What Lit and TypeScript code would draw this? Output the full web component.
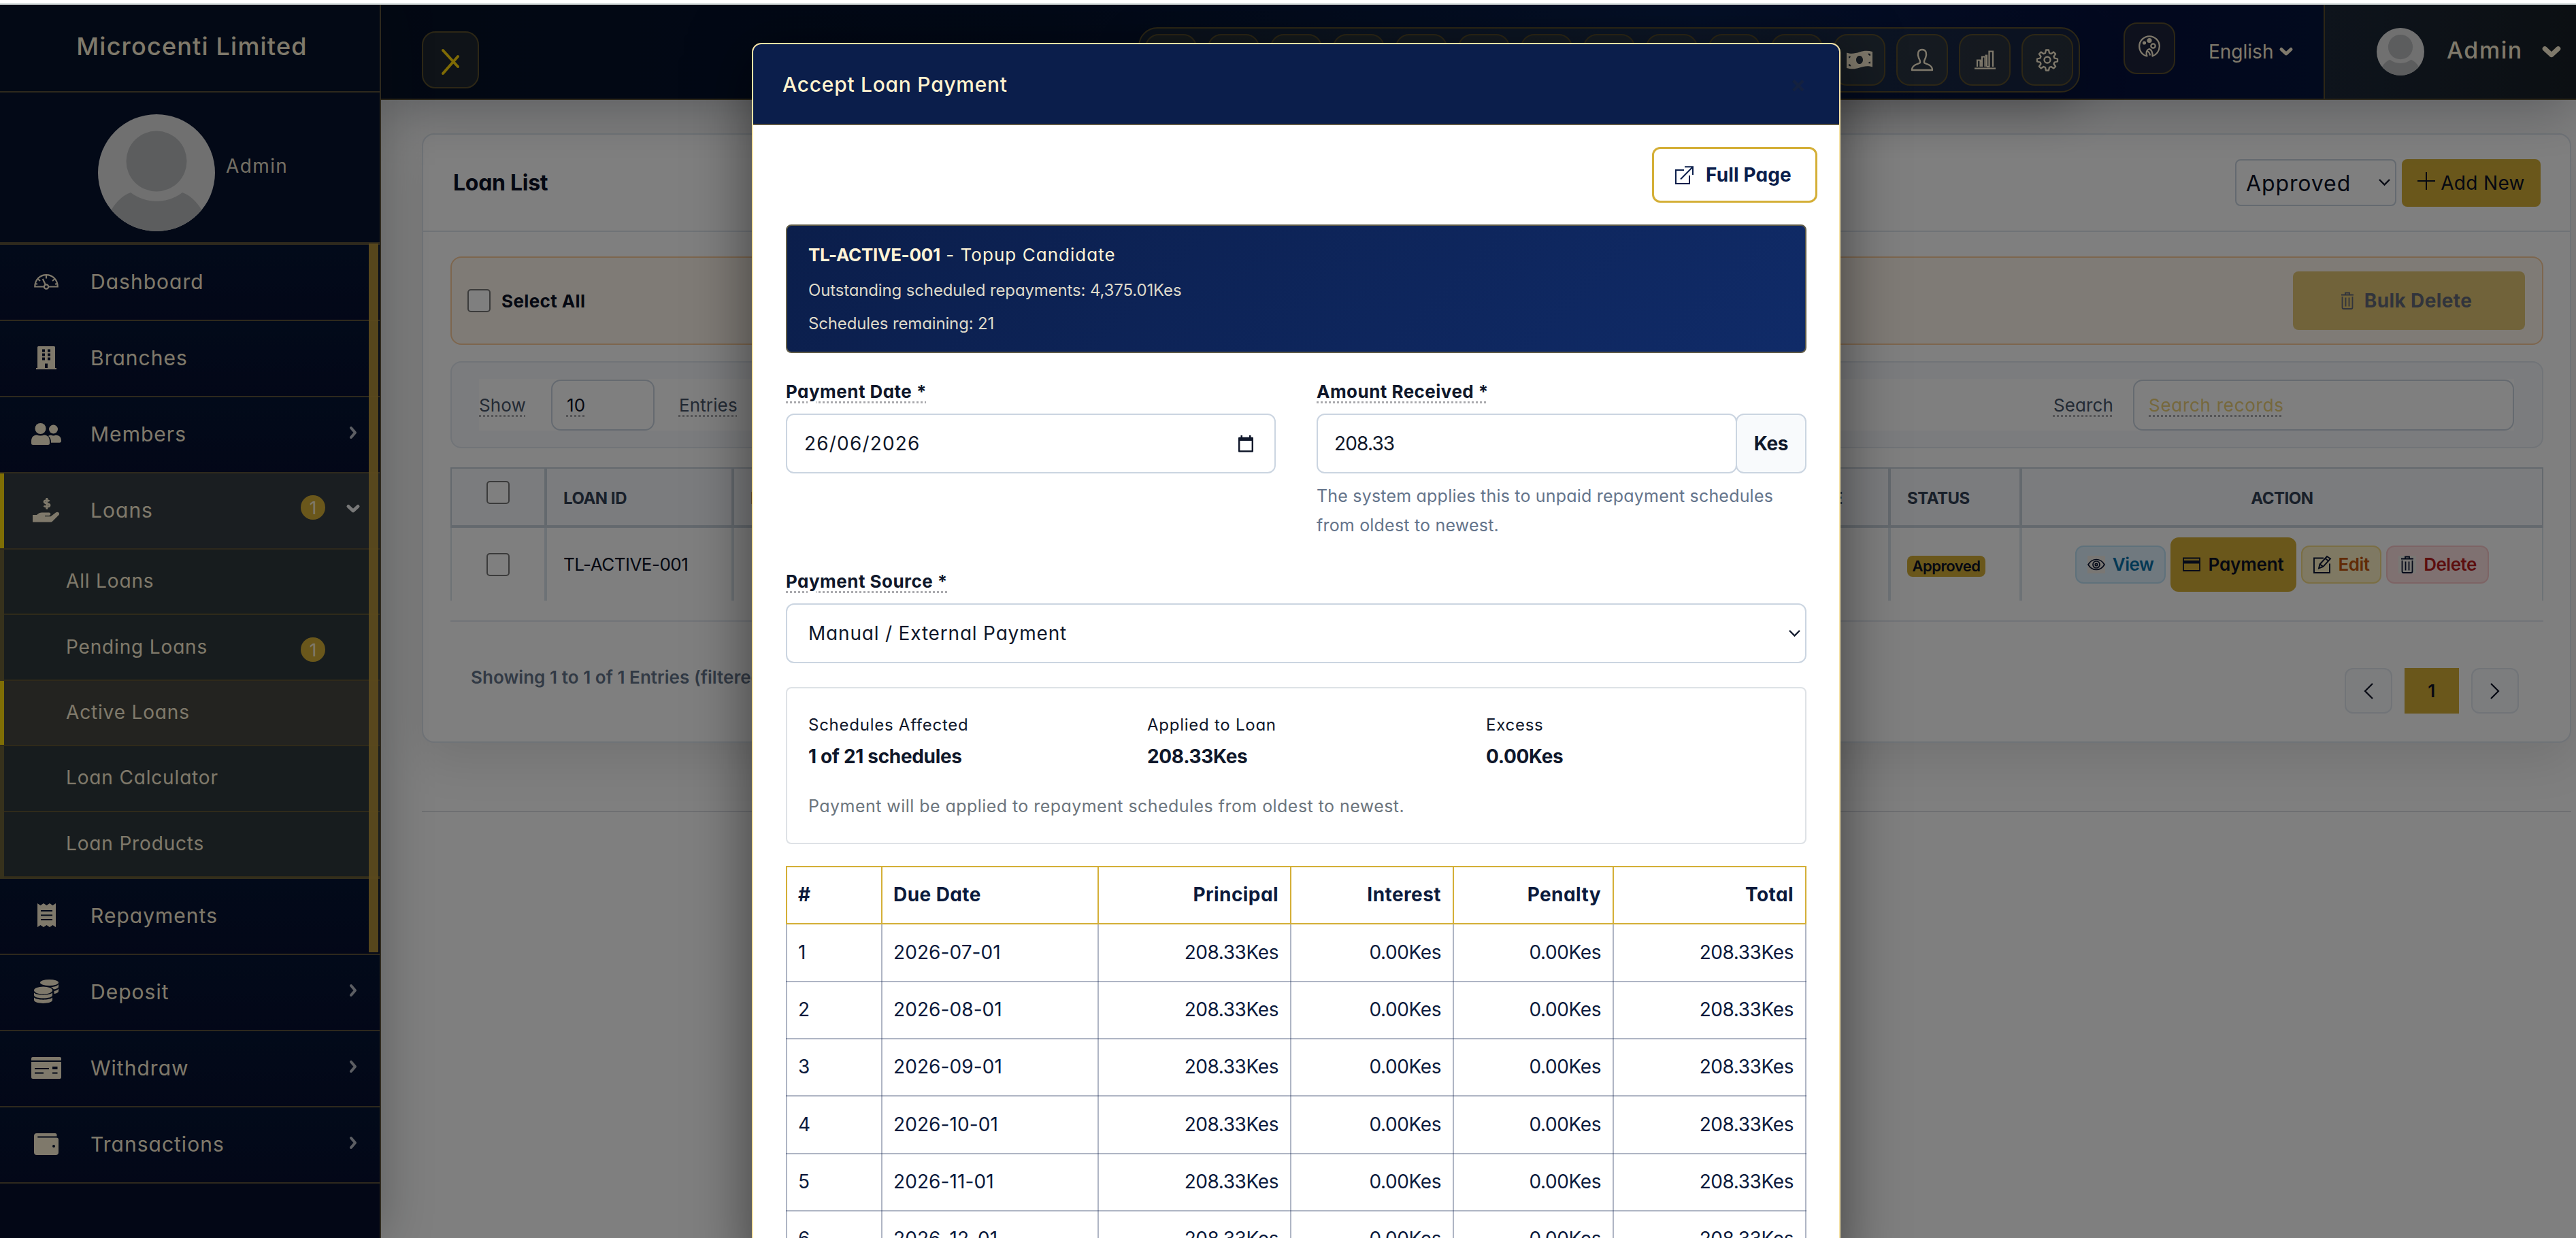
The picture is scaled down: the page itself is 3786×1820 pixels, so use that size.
import { LitElement, html, css, svg, nothing } from 'lit';
import { customElement, property } from 'lit/decorators.js';
import { classMap } from 'lit/directives/class-map.js';

const shared = css`
  * {
    box-sizing: border-box;
  }

  :host {
    font-family: Inter, "Liberation Sans", sans-serif;
    font-feature-settings: "cv11";
    letter-spacing: 0.02em;
    white-space: nowrap;
  }

  svg {
    display: block;
    flex: none;
    overflow: visible;
  }

  .dotted {
    text-decoration: underline dotted 3px #aaaaae;
    text-underline-offset: 5px;
  }
`;

const icons: Record<string, unknown> = {
  dashboard: svg`<svg width="36" height="23" viewBox="0 0 36 23" fill="none" stroke="currentColor" stroke-width="2.2">
    <path d="M14.5 18.5H1.3C1.3 8.500 8.500 1.200 18 1.200S34.700 8.500 34.700 18.500H21.500"/>
    <circle cx="18" cy="18.500" r="3.200"/><path d="M16.800 15.500 12.800 7M18 1.500v5M6 7.500l3 2.500M30 7.500l-3 2.500M2 14l3 .8M34 14l-3 .8"/></svg>`,
  branches: svg`<svg width="30" height="34" viewBox="0 0 30 34" fill="currentColor" fill-rule="evenodd">
    <path d="M2 1.500Q2 0 3.500 0h23Q28 0 28 1.500V32h2v2H0v-2h2zM9 4.500v4h4v-4zm8 0v4h4v-4zM9 10.500v4h4v-4zm8 0v4h4v-4zM9 16.500v4h4v-4zm8 0v4h4v-4zM13 25.500V32h4v-6.500z"/></svg>`,
  members: svg`<svg width="44" height="32" viewBox="0 0 44 32" fill="currentColor">
    <circle cx="13.500" cy="8" r="8"/><circle cx="32.500" cy="9" r="6.500"/>
    <path d="M0 27c0-6 3-9.500 8-9.500 3.500 1.300 7.500 1.300 11 0 5 0 8 3.500 8 9.500v2.500Q27 32 24.500 32h-22Q0 32 0 29.500zM25 19c1-.8 2.300-1.200 4-1.200 2.300.9 4.700.9 7 0 5 0 8 2.700 8 8.200 0 1.800-.8 2.700-2.500 2.700H29c.2-4.500-1.200-7.700-4-9.700z"/></svg>`,
  loans: svg`<svg width="40" height="36" viewBox="0 0 40 36" fill="currentColor">
    <path d="M0 25h6c3-3 6-4 9-3.500h9c3 .2 3 4 0 4.500h-6v1.200h8.500l7.500-5.700c3-2 6.500 1 4.500 3.500L29.500 34q-1.300 1.500-3 1.500H0z"/>
    <path d="M24.500 5c-1-1.800-7.500-2-7.500.8 0 3.300 8 1.500 8 5 0 3-7 2.700-8.200.5M20.800 0v16.500" fill="none" stroke="currentColor" stroke-width="2.800"/></svg>`,
  repayments: svg`<svg width="27" height="35" viewBox="0 0 27 35" fill="currentColor" fill-rule="evenodd">
    <path d="M0 0l4.500 3L9 0l4.500 3L18 0l4.500 3L27 0v35l-4.500-3L18 35l-4.500-3L9 35l-4.500-3L0 35zM5 10v2h17v-2zm0 6.500v2h17v-2zM5 23v2h17v-2z"/></svg>`,
  deposit: svg`<svg width="36" height="35" viewBox="0 0 36 35" fill="currentColor">
    <ellipse cx="22.500" cy="4.500" rx="13.500" ry="4.500"/><path d="M36 7v3.500c0 2-3 3.500-7 4-1-1.500-2.500-2.500-4.500-3.200C29.500 11 34 9.500 36 7zM36 13.500V17c0 2-2.700 3.400-6.500 4v-4c2.800-.6 5.200-1.800 6.500-3.500z"/>
    <ellipse cx="13.500" cy="16" rx="13.500" ry="5.500"/><path d="M0 19.500c5 4.200 22 4.200 27 0V23c0 6-27 6-27 0zM0 26.500c5 4.200 22 4.200 27 0V30c0 6.500-27 6.500-27 0z"/></svg>`,
  withdraw: svg`<svg width="44" height="32" viewBox="0 0 44 32" fill="currentColor" fill-rule="evenodd">
    <path d="M0 5V2Q0 0 2 0h40q2 0 2 2v3zM0 7h44v22.500Q44 32 41.500 32h-39Q0 32 0 29.500zM5 16v2h21v-2zm0 6.500v2h13v-2zM31 14v4h7.500v-4zm0 8.500v2h7.500v-2z"/></svg>`,
  transactions: svg`<svg width="36" height="32" viewBox="0 0 36 32" fill="currentColor" fill-rule="evenodd">
    <path d="M4 0h27q2.500 0 2.500 2.500V4.500H6q-1 0-1 1t1 1h27q3 0 3 3V28q0 4-4 4H4q-4 0-4-4V4Q0 0 4 0zM29 17a2 2 0 1 0 .01 4A2 2 0 0 0 29 17z"/></svg>`,
  right: svg`<svg width="20" height="20" viewBox="0 0 20 20" fill="none" stroke="currentColor" stroke-width="4" stroke-linecap="round" stroke-linejoin="round"><path d="M7 3l6 7-6 7"/></svg>`,
  down: svg`<svg width="20" height="12" viewBox="0 0 20 12" fill="none" stroke="currentColor" stroke-width="5" stroke-linecap="round" stroke-linejoin="round"><path d="M3 2.500l7 6.500 7-6.500"/></svg>`,
  thinDown: svg`<svg width="17" height="10" viewBox="0 0 17 10" fill="none" stroke="currentColor" stroke-width="2.400"><path d="M1 1l7.500 7.500L16 1"/></svg>`,
  menuClose: svg`<svg width="26" height="38" viewBox="0 0 26 38" fill="none" stroke="currentColor" stroke-width="4" stroke-linecap="round"><path d="M2 2l22 24M2 36l22-25"/></svg>`,
  money: svg`<svg width="38" height="28" viewBox="0 0 38 28" fill="currentColor" fill-rule="evenodd">
    <path d="M0 3.500C7 6 13 4.500 19 2.500S31 0 38 2v22.500c-7-2.500-13-1-19 1S7 28 0 26zM19 8c-3 0-5 2.700-5 6s2 6 5 6 5-2.700 5-6-2-6-5-6zM3 8.500v3c1.600 0 2.800-1.200 3-2.600zM35 19.500v-3c-1.600 0-2.800 1.200-3 2.600zM3 20v3l3.400.4C6.400 21.500 5 20 3 20zM35 8V5l-3.400-.4C31.600 6.500 33 8 35 8z"/></svg>`,
  person: svg`<svg width="32" height="32" viewBox="0 0 32 32" fill="none" stroke="currentColor" stroke-width="2.400" stroke-linejoin="round">
    <path d="M11 13c-2-5.500-1.500-12 5-12s7 6.500 5 12c-.7 2-2 3.500-2 5.500v1.500c0 2 12 1.500 12 11H1c0-9.500 12-9 12-11v-1.500c0-2-1.300-3.500-2-5.500z"/></svg>`,
  bars: svg`<svg width="31" height="28" viewBox="0 0 31 28" fill="none" stroke="currentColor" stroke-width="2.200">
    <path d="M0 26.700h31M4 24V14.500h4.500V24M11 24V9.500h4.500V24M8.500 16H11M18 24V7.500h-2.500M18 24h3.500V1.500H27V24"/></svg>`,
  gear: svg`<svg width="32" height="32" viewBox="0 0 32 32" fill="none" stroke="currentColor" stroke-width="2.300" stroke-linejoin="round">
    <circle cx="16" cy="16" r="4.500"/><path d="M14 1.500h4l1 4.500 2.500 1 3.800-2.500 2.800 2.800L25.500 11l1 2.500 4.500 1v4l-4.500 1-1 2.500 2.600 3.700-2.800 2.800-3.800-2.500-2.500 1-1 4.500h-4l-1-4.500-2.500-1-3.800 2.500-2.800-2.800L6.500 22l-1-2.500-4.500-1v-4l4.500-1 1-2.500-2.600-3.700 2.800-2.800L10.500 7 13 6z"/></svg>`,
  palette: svg`<svg width="32" height="32" viewBox="0 0 32 32" fill="none" stroke="currentColor" stroke-width="2.200" stroke-linejoin="round">
    <path d="M12.500 30.500C5.500 29 1.200 23 1.200 16 1.200 8 7.800 1.300 16 1.300S30.800 8 30.800 16c0 7-4.300 12.500-10.300 14.500.5-5.500-1.500-9-4.500-10.500-4.500 1.500-5.500 6-3.500 10.500z"/>
    <circle cx="21.500" cy="15.500" r="3.200"/><circle cx="16" cy="7.500" r="2.500" fill="currentColor"/><circle cx="8.500" cy="11" r="1.500" fill="currentColor"/><path d="M13 23.500c2 .5 3.500 2.500 4 6"/></svg>`,
  plus: svg`<svg width="26" height="26" viewBox="0 0 26 26" stroke="currentColor" stroke-width="2"><path d="M13 0v26M0 13h26"/></svg>`,
  trash: svg`<svg width="26" height="26" viewBox="0 0 26 26" fill="none" stroke="currentColor" stroke-width="1.800">
    <path d="M4 4.500h18M10 4V1.500h6V4M5.500 7v16q0 2 2 2h11q2 0 2-2V7M10.500 8.500v13M15.500 8.500v13"/></svg>`,
  eye: svg`<svg width="26" height="26" viewBox="0 0 26 26" fill="none" stroke="currentColor" stroke-width="1.700">
    <path d="M1 13c3-5 7-7.500 12-7.500S22 8 25 13c-3 5-7 7.500-12 7.500S4 18 1 13z"/><circle cx="13" cy="13" r="5"/><circle cx="13" cy="13" r="1.700"/></svg>`,
  card: svg`<svg width="26" height="26" viewBox="0 0 26 26"><path d="M1 3.500h24v18.500H1z" fill="none" stroke="currentColor" stroke-width="1.800"/><path d="M1 7h24v4.500H1z" fill="currentColor"/></svg>`,
  edit: svg`<svg width="26" height="26" viewBox="0 0 26 26" fill="none" stroke="currentColor" stroke-width="1.900">
    <path d="M15 3.500H1V25h23V11.500M8 18.500l1.500-6L20 1l5 3.500L14.500 16zM9.500 12.500l5 3.500M17.500 4l4.500 3.500"/></svg>`,
  external: svg`<svg width="27" height="27" viewBox="0 0 27 27" fill="none" stroke="currentColor" stroke-width="2"><path d="M13 6H1v20h20V14M14 1.200h12V13M26 1.200 8 19.500"/></svg>`,
  calendar: svg`<svg width="22" height="25" viewBox="0 0 22 25"><path d="M1.200 4h19.600v19.500H1.200z" fill="none" stroke="currentColor" stroke-width="2.400" stroke-linejoin="round"/><path d="M1 3.500h20V8H1zM3.500 0h2.500v4H3.500zM16 0h2.500v4H16z" fill="currentColor"/></svg>`,
  prev: svg`<svg width="14" height="24" viewBox="0 0 14 24" fill="none" stroke="currentColor" stroke-width="2.200"><path d="M13 1 2 12l11 11"/></svg>`,
  next: svg`<svg width="14" height="24" viewBox="0 0 14 24" fill="none" stroke="currentColor" stroke-width="2.200"><path d="M1 1l11 11L1 23"/></svg>`,
};

@customElement('user-avatar')
class UserAvatar extends LitElement {
  @property({ type: Number }) size = 70;

  static styles = css`
    :host {
      display: block;
      flex: none;
    }
    svg {
      display: block;
      border-radius: 50%;
    }
  `;

  render() {
    return html`
      <svg width=${this.size} height=${this.size} viewBox="0 0 172 172">
        <rect width="172" height="172" fill="#e0e0e0" />
        <circle cx="86" cy="69" r="44.500" fill="#b8babc" />
        <path d="M20 140c8-13 17-21 28-25 22 17 54 17 76 0 11 4 20 12 28 25v32H20z" fill="#b8babc" />
      </svg>
    `;
  }
}

interface NavEntry {
  label: string;
  icon?: string;
  arrow?: 'right' | 'down';
  badge?: number;
  active?: boolean;
  children?: NavEntry[];
}

const menu: NavEntry[] = [
  { label: 'Dashboard', icon: 'dashboard' },
  { label: 'Branches', icon: 'branches' },
  { label: 'Members', icon: 'members', arrow: 'right' },
  {
    label: 'Loans',
    icon: 'loans',
    arrow: 'down',
    badge: 1,
    active: true,
    children: [
      { label: 'All Loans' },
      { label: 'Pending Loans', badge: 1 },
      { label: 'Active Loans', active: true },
      { label: 'Loan Calculator' },
      { label: 'Loan Products' },
    ],
  },
  { label: 'Repayments', icon: 'repayments' },
  { label: 'Deposit', icon: 'deposit', arrow: 'right' },
  { label: 'Withdraw', icon: 'withdraw', arrow: 'right' },
  { label: 'Transactions', icon: 'transactions', arrow: 'right' },
];

@customElement('side-bar')
class SideBar extends LitElement {
  static styles = [
    shared,
    css`
      :host {
        display: block;
        position: relative;
        z-index: 2;
        width: 560px;
        flex: none;
        background: #070f2c;
        border-right: 2px solid #5c523a;
        box-shadow: 0 0 70px rgba(20, 30, 30, 0.3);
        color: #fff3d6;
      }
      .brand {
        height: 129px;
        padding: 0 0 6px 6px;
        display: flex;
        align-items: center;
        justify-content: center;
        border-bottom: 2px solid #5c523a;
        font-size: 36px;
        font-weight: 500;
        letter-spacing: 0.033em;
        background: #07132a;
      }
      .profile {
        display: flex;
        align-items: center;
        gap: 16px;
        padding: 32px 0 16px 144px;
        border-bottom: 4px solid #5c523a;
        background: #06122e;
        font-size: 28px;
        letter-spacing: 0.05em;
      }
      .profile span {
        margin-bottom: 20px;
        color: #e6dfc8;
      }
      .row {
        display: flex;
        align-items: center;
        height: 112px;
        padding: 0 29px 2px 44px;
        border-bottom: 2px solid #5c523a;
        font-size: 30px;
        letter-spacing: 0.034em;
        background: linear-gradient(#051534, #060f30);
      }
      .icon {
        width: 48px;
        margin-right: 41px;
        display: flex;
        justify-content: center;
      }
      .row.active {
        background: #343c42;
        box-shadow: inset 6px 0 #ffdc0a;
      }
      .arrow {
        margin: 0 0 4px auto;
        color: #b9bcc6;
      }
      .active .arrow {
        color: #f0f0f0;
      }
      .badge {
        width: 36px;
        height: 36px;
        border-radius: 50%;
        background: #d4af37;
        color: #fff3d6;
        font-size: 26px;
        letter-spacing: 0;
        display: flex;
        align-items: center;
        justify-content: center;
        margin: 0 31px 8px auto;
      }
      .badge + .arrow {
        margin-left: 0;
      }
      .sub {
        border-left: 6px solid #6c6238;
        border-bottom: 2px solid #6c6238;
        background: #2f393c;
      }
      .item {
        display: flex;
        align-items: center;
        height: 96.4px;
        padding: 0 0 2px 91px;
        font-size: 28px;
        letter-spacing: 0.03em;
        border-bottom: 2px solid #5f5534;
      }
      .item.active {
        margin-left: -6px;
        padding-left: 97px;
        background: #474740;
        box-shadow: inset 6px 0 #ffdc0a;
      }
      .item .badge {
        margin: 9px 80px 0 auto;
      }
      .thumb {
        position: absolute;
        left: 542px;
        top: 351px;
        width: 14px;
        height: 1042px;
        background: rgba(182, 147, 58, 0.95);
      }
    `,
  ];

  renderItem(item: NavEntry) {
    return html`
      <div class=${classMap({ item: true, active: !!item.active })}>
        ${item.label}${item.badge ? html`<span class="badge">${item.badge}</span>` : nothing}
      </div>
    `;
  }

  render() {
    return html`
      <div class="brand">Microcenti Limited</div>
      <div class="profile"><user-avatar size="172"></user-avatar><span>Admin</span></div>
      ${menu.map(
        (entry) => html`
          <div class=${classMap({ row: true, active: !!entry.active })}>
            <span class="icon">${icons[entry.icon!]}</span>${entry.label}
            ${entry.badge ? html`<span class="badge">${entry.badge}</span>` : nothing}
            ${entry.arrow ? html`<span class="arrow">${icons[entry.arrow]}</span>` : nothing}
          </div>
          ${entry.children ? html`<div class="sub">${entry.children.map((c) => this.renderItem(c))}</div>` : nothing}
        `
      )}
      <div class="thumb"></div>
    `;
  }
}

const shortcuts = [...Array(11).fill(''), 'money', 'person', 'bars', 'gear'];

@customElement('top-bar')
class TopBar extends LitElement {
  static styles = [
    shared,
    css`
      :host {
        display: flex;
        position: relative;
        z-index: 1;
        height: 140px;
        padding-left: 60px;
        border-bottom: 2px solid #5a5034;
        background: linear-gradient(90deg, #051026, #05122e 30%, #0a2050 60%, #05103c 80%, #051a3c);
        box-shadow: 0 8px 80px rgba(20, 25, 40, 0.34);
        color: #fff3d6;
      }
      .square {
        display: flex;
        align-items: center;
        justify-content: center;
        width: 76px;
        height: 76px;
        border: 2px solid #5a4f2c;
        border-radius: 20px;
        background: rgba(120, 110, 50, 0.2);
      }
      .close {
        width: 84px;
        height: 84px;
        margin: 39px auto 0 0;
        color: #ffd60a;
        background: #1e2630;
      }
      .close svg {
        margin-top: 6px;
      }
      .group {
        display: flex;
        gap: 16px;
        height: 96px;
        margin: 33px 64px 0 0;
        padding: 8px;
        border: 2px solid #5a4f2c;
        border-radius: 28px;
        background: rgba(90, 100, 70, 0.2);
        box-shadow: 0 24px 70px rgba(0, 0, 0, 0.24);
      }
      .theme {
        margin: 26px 49px 0 0;
      }
      .theme svg {
        margin-bottom: 6px;
      }
      .lang {
        display: flex;
        align-items: center;
        gap: 9px;
        width: 169px;
        font-size: 28px;
        letter-spacing: 0;
      }
      .user {
        display: flex;
        align-items: center;
        width: 371px;
        padding-left: 76px;
        border-left: 2px solid #5a4f2c;
        background: linear-gradient(90deg, #1c2838, #181f26);
        font-size: 34px;
        font-weight: 500;
        letter-spacing: 0.045em;
      }
      .user span {
        margin: 0 28px 6px 33px;
      }
      .user svg {
        width: 28px;
        height: 17px;
      }
    `,
  ];

  render() {
    return html`
      <div class="square close">${icons.menuClose}</div>
      <div class="group">${shortcuts.map((name) => html`<div class="square">${icons[name] ?? nothing}</div>`)}</div>
      <div class="square theme">${icons.palette}</div>
      <div class="lang">English ${icons.down}</div>
      <div class="user"><user-avatar size="70"></user-avatar><span>Admin</span>${icons.down}</div>
    `;
  }
}

@customElement('loan-list')
class LoanList extends LitElement {
  static styles = [
    shared,
    css`
      :host {
        display: block;
        padding: 49px 7px 0 60px;
        color: #0a1024;
      }
      .card {
        height: 896px;
        padding: 0 39px 0 40px;
        border: 2px solid #dfe6ee;
        border-radius: 18px;
        background: #fff;
        box-shadow: 0 24px 70px rgba(0, 0, 0, 0.1);
      }
      .head {
        display: flex;
        align-items: center;
        height: 143px;
        margin: 0 -39px 0 -40px;
        padding: 0 43px 0 44px;
        border-bottom: 2px solid #dfe6ee;
      }
      h2 {
        margin: 0 auto 0 0;
        font-size: 32px;
        font-weight: 650;
        letter-spacing: -0.009em;
      }
      .filter {
        display: flex;
        align-items: center;
        justify-content: space-between;
        width: 237px;
        height: 69px;
        padding: 2px 7px 0 14px;
        margin-right: 8px;
        border: 2px solid #c9d4e0;
        border-radius: 8px;
        font-size: 32px;
        letter-spacing: 0.028em;
      }
      .filter svg {
        margin-bottom: 4px;
      }
      .add {
        display: flex;
        align-items: center;
        justify-content: center;
        gap: 8px;
        width: 204px;
        height: 70px;
        border-radius: 8px;
        background: #d4af37;
        font-size: 28px;
        letter-spacing: 0.012em;
      }
      .add svg {
        margin-bottom: 6px;
      }
      .bulk {
        display: flex;
        align-items: center;
        height: 130px;
        margin-top: 36px;
        padding: 0 23px;
        border: 2px solid #fbcc9c;
        border-radius: 16px;
        background: #fff7ed;
        font-size: 26px;
        font-weight: 650;
        letter-spacing: 0.015em;
      }
      .box {
        width: 34px;
        height: 34px;
        border: 2px solid #767676;
        border-radius: 5px;
        background: #fff;
      }
      .bulk .box {
        margin-right: 16px;
      }
      .bulk-delete {
        display: flex;
        align-items: center;
        justify-content: center;
        gap: 14px;
        width: 341px;
        height: 86px;
        margin: 0 2px 0 auto;
        padding-right: 10px;
        border-radius: 8px;
        background: #e2c774;
        color: #626878;
        font-size: 28px;
      }
      .bulk-delete svg {
        margin: 0 -2px 0 -1px;
      }
      .tools {
        height: 128px;
        margin-top: 24px;
        padding: 24px 41px 24px 40px;
        border: 2px solid #e2e8f0;
        border-radius: 16px;
        background: #f6f9fc;
      }
      .tools-inner {
        display: flex;
        align-items: center;
        height: 76px;
        background: #fff;
        font-size: 26px;
        letter-spacing: 0.005em;
        color: #475569;
      }
      .field {
        display: flex;
        align-items: center;
        height: 75px;
        padding-left: 21px;
        border: 2px solid #cbd5e1;
        border-radius: 14px;
      }
      .length {
        width: 152px;
        margin: 0 36px 0 37px;
        color: #0a1024;
      }
      .search {
        width: 560px;
        margin-left: 29px;
        color: #ecd078;
        letter-spacing: 0.028em;
      }
      .spacer {
        flex: 1;
      }
      .table {
        margin-top: 28px;
        display: grid;
        grid-template-columns: 140px 275px 1436px 264px 193px 1fr;
      }
      .th,
      .td {
        display: flex;
        align-items: center;
        padding: 0 24px;
        border: solid #dbe4ec;
        border-width: 0 2px;
      }
      .th {
        height: 89px;
        padding-top: 3px;
        border: 2px solid #c8d3dc;
        border-bottom-width: 4px;
        background: #f6f9fc;
        color: #334155;
        font-size: 24px;
        font-weight: 700;
        letter-spacing: -0.02em;
      }
      .td {
        height: 107px;
        font-size: 26px;
        letter-spacing: -0.02em;
      }
      .center {
        justify-content: center;
      }
      .th .box {
        margin-bottom: 16px;
      }
      .status {
        margin-top: 5px;
        width: 115px;
        height: 31px;
        border-radius: 8px;
        background: #d4af37;
        font-size: 22px;
        line-height: 31px;
        font-weight: 600;
        text-align: center;
      }
      .actions {
        gap: 7px;
      }
      .btn {
        display: flex;
        align-items: center;
        justify-content: center;
        gap: 11px;
        height: 56px;
        border: 2px solid;
        border-radius: 12px;
        font-size: 26px;
        font-weight: 600;
      }
      .btn i {
        background: #f3efe9;
        color: #0a1533;
      }
      .view {
        width: 133px;
        background: #e0f2fe;
        border-color: #bfe3f7;
        color: #0770a8;
      }
      .pay {
        width: 185px;
        height: 80px;
        background: #d4af37;
        border-color: #d4af37;
        letter-spacing: -0.005em;
      }
      .edit {
        width: 118px;
        background: #fef3c7;
        border-color: #f5dc88;
        color: #c2560c;
      }
      .edit i,
      .pay i {
        background: none;
      }
      .delete {
        width: 151px;
        background: #fee2e2;
        border-color: #fbc8cb;
        color: #b91c1c;
      }
      .foot {
        display: flex;
        align-items: flex-start;
        margin-top: 29px;
        border-top: 2px solid #e2e8f0;
        font-size: 26px;
        font-weight: 600;
        color: #64748b;
      }
      .foot p {
        margin: 66px auto 0 30px;
        letter-spacing: 0.002em;
      }
      .pages {
        display: flex;
        align-items: center;
        gap: 18px;
        margin: 68px 36px 0 0;
        color: #0a1024;
      }
      .page {
        display: flex;
        align-items: center;
        justify-content: center;
        width: 70px;
        height: 67px;
        border: 2px solid #e2e8f0;
        border-radius: 12px;
        background: #f8fafc;
      }
      .page.current {
        width: 80px;
        border: 0;
        border-radius: 0;
        background: #d4af37;
      }
      .rule {
        height: 2px;
        margin-top: 100px;
        background: #dcdfe4;
      }
    `,
  ];

  render() {
    return html`
      <div class="card">
        <div class="head">
          <h2>Loan List</h2>
          <div class="filter">Approved ${icons.thinDown}</div>
          <div class="add">${icons.plus}Add New</div>
        </div>
        <div class="bulk">
          <span class="box"></span>Select All
          <div class="bulk-delete">${icons.trash}Bulk Delete</div>
        </div>
        <div class="tools">
          <div class="tools-inner">
            <span class="dotted">Show</span>
            <div class="field length"><span class="dotted">10</span></div>
            <span class="dotted">Entries</span>
            <span class="spacer"></span>
            <span class="dotted">Search</span>
            <div class="field search"><span class="dotted">Search records</span></div>
          </div>
        </div>
        <div class="table">
          <div class="th center"><span class="box"></span></div>
          <div class="th">LOAN ID</div>
          <div class="th">BORROWER</div>
          <div class="th">RELEASE DATE</div>
          <div class="th">STATUS</div>
          <div class="th center">ACTION</div>
          <div class="td center"><span class="box"></span></div>
          <div class="td">TL-ACTIVE-001</div>
          <div class="td"></div>
          <div class="td"></div>
          <div class="td"><span class="status">Approved</span></div>
          <div class="td center actions">
            <span class="btn view"><i>${icons.eye}</i>View</span>
            <span class="btn pay"><i>${icons.card}</i>Payment</span>
            <span class="btn edit"><i>${icons.edit}</i>Edit</span>
            <span class="btn delete"><i>${icons.trash}</i>Delete</span>
          </div>
        </div>
        <div class="foot">
          <p>Showing 1 to 1 of 1 Entries (filtered from 3 total)</p>
          <div class="pages">
            <span class="page">${icons.prev}</span>
            <span class="page current">1</span>
            <span class="page">${icons.next}</span>
          </div>
        </div>
      </div>
      <div class="rule"></div>
    `;
  }
}

const dueDates = [
  '2026-07-01',
  '2026-08-01',
  '2026-09-01',
  '2026-10-01',
  '2026-11-01',
  '2026-12-01',
];

@customElement('payment-modal')
class PaymentModal extends LitElement {
  static styles = [
    shared,
    css`
      :host {
        display: block;
        width: 1600px;
        border: 2px solid #f5e2a4;
        border-radius: 14px 14px 0 0;
        background: #fff;
        color: #0f172a;
        box-shadow: 0 16px 90px rgba(0, 0, 0, 0.5);
        overflow: hidden;
      }
      header {
        display: flex;
        align-items: center;
        justify-content: space-between;
        height: 119px;
        padding: 0 48px 0 43px;
        border-bottom: 2px solid #5f5845;
        background: #0b1e4b;
        color: #fff3cf;
        font-size: 30px;
        font-weight: 500;
        letter-spacing: 0.024em;
      }
      .x {
        color: #14213f;
        font-size: 34px;
        font-weight: 700;
      }
      .full {
        display: flex;
        align-items: center;
        gap: 18px;
        width: 243px;
        height: 82px;
        margin: 32px 32px 32px auto;
        padding-left: 31px;
        border: 3px solid #d4af37;
        border-radius: 12px;
        color: #0b1e4b;
        font-size: 28px;
        font-weight: 700;
        letter-spacing: 0.005em;
      }
      .body {
        padding: 0 48px;
      }
      .panel {
        height: 189px;
        padding: 18px 31px;
        border: 2px solid #5f5b48;
        border-radius: 8px;
        background: linear-gradient(135deg, #0b1e4b, #102b68);
        color: #fff3d6;
        font-size: 26px;
        line-height: 49px;
        letter-spacing: 0.04em;
      }
      .panel b {
        font-weight: 650;
        letter-spacing: -0.012em;
      }
      .panel p {
        margin: 0;
        color: #dedaca;
        font-size: 24px;
        letter-spacing: -0.006em;
      }
      .panel b + p {
        margin-top: 3px;
      }
      .cols {
        display: grid;
        grid-template-columns: 1fr 1fr;
        gap: 60px;
        margin-top: 37px;
      }
      label {
        display: table;
        height: 40px;
        margin-bottom: 12px;
        font-size: 26px;
        font-weight: 700;
        line-height: 40px;
        letter-spacing: 0.018em;
      }
      .input {
        display: flex;
        align-items: center;
        justify-content: space-between;
        height: 88px;
        padding: 0 31px 0 25px;
        border: 2px solid #cbd5e1;
        border-radius: 12px;
        font-size: 28px;
      }
      .date {
        letter-spacing: 0.042em;
      }
      .amount {
        flex: 1;
        margin-right: -2px;
        padding-left: 24px;
        letter-spacing: -0.03em;
      }
      .pair {
        display: flex;
      }
      .unit {
        width: 104px;
        padding: 0;
        justify-content: center;
        background: #f8fafc;
        font-weight: 700;
        letter-spacing: -0.01em;
      }
      .help {
        margin: 12px 0 0;
        color: #64748b;
        font-size: 25px;
        line-height: 43px;
        letter-spacing: 0.008em;
      }
      .source {
        margin-top: 41px;
      }
      .select {
        padding: 0 7px 0 31px;
        letter-spacing: 0.029em;
      }
      .summary {
        display: grid;
        grid-template-columns: repeat(3, 498px);
        height: 231px;
        margin: 35px 0 32px;
        padding: 31px 31px;
        align-content: start;
        border: 2px solid #dee2e6;
        border-radius: 8px;
        font-size: 24px;
        line-height: 46px;
        letter-spacing: 0.031em;
      }
      .summary b {
        display: block;
        font-size: 28px;
        font-weight: 700;
        letter-spacing: -0.012em;
      }
      .note {
        grid-column: 1 / -1;
        margin: 27px 0 0;
        color: #6c757d;
        font-size: 25px;
        letter-spacing: 0.018em;
      }
      table {
        width: 1500px;
        table-layout: fixed;
        border-collapse: collapse;
        color: #0b1a3c;
        font-size: 28px;
      }
      th,
      td {
        height: 84.35px;
        padding: 0 17px 2px 16px;
        border: 2px solid rgba(11, 30, 75, 0.33);
        text-align: right;
        letter-spacing: -0.015em;
      }
      th {
        border-color: #d4af37;
        font-weight: 700;
        letter-spacing: 0.015em;
      }
      th:nth-child(-n + 2),
      td:nth-child(-n + 2) {
        text-align: left;
      }
      td:nth-child(2) {
        letter-spacing: 0.003em;
      }
      .c1 {
        width: 140px;
      }
      .c2 {
        width: 318px;
      }
      .c3,
      .c6 {
        width: 283px;
      }
      .c4 {
        width: 239px;
      }
      .c5 {
        width: 235px;
      }
    `,
  ];

  render() {
    return html`
      <header>Accept Loan Payment<span class="x">×</span></header>
      <div class="full">${icons.external}Full Page</div>
      <div class="body">
        <div class="panel">
          <b>TL-ACTIVE-001</b> - Topup Candidate
          <p>Outstanding scheduled repayments: 4,375.01Kes</p>
          <p>Schedules remaining: 21</p>
        </div>
        <div class="cols">
          <div>
            <label class="dotted">Payment Date *</label>
            <div class="input date">26/06/2026 ${icons.calendar}</div>
          </div>
          <div>
            <label class="dotted">Amount Received *</label>
            <div class="pair">
              <div class="input amount">208.33</div>
              <div class="input unit">Kes</div>
            </div>
            <p class="help">The system applies this to unpaid repayment schedules<br />from oldest to newest.</p>
          </div>
        </div>
        <div class="source">
          <label class="dotted">Payment Source *</label>
          <div class="input select">Manual / External Payment ${icons.thinDown}</div>
        </div>
        <div class="summary">
          <div>Schedules Affected<b>1 of 21 schedules</b></div>
          <div>Applied to Loan<b>208.33Kes</b></div>
          <div>Excess<b>0.00Kes</b></div>
          <p class="note">Payment will be applied to repayment schedules from oldest to newest.</p>
        </div>
        <table>
          <colgroup>
            <col class="c1" /><col class="c2" /><col class="c3" /><col class="c4" /><col class="c5" /><col class="c6" />
          </colgroup>
          <thead>
            <tr><th>#</th><th>Due Date</th><th>Principal</th><th>Interest</th><th>Penalty</th><th>Total</th></tr>
          </thead>
          <tbody>
            ${dueDates.map(
              (date, i) => html`
                <tr><td>${i + 1}</td><td>${date}</td><td>208.33Kes</td><td>0.00Kes</td><td>0.00Kes</td><td>208.33Kes</td></tr>
              `
            )}
          </tbody>
        </table>
      </div>
    `;
  }
}

@customElement('app-root')
class AppRoot extends LitElement {
  static styles = [
    shared,
    css`
      :host {
        display: block;
        height: 1820px;
        overflow: hidden;
        background: #fff;
      }
      .strip {
        height: 7px;
        border-bottom: 2px solid #c9d1d1;
      }
      .page {
        display: flex;
        position: relative;
        height: 1813px;
        overflow: hidden;
      }
      main {
        flex: 1;
        background: #fefefe;
      }
      .backdrop {
        position: absolute;
        inset: 0;
        z-index: 3;
        background: rgba(0, 0, 0, 0.5);
      }
      payment-modal {
        position: absolute;
        left: 1105px;
        top: 56px;
        z-index: 4;
      }
    `,
  ];

  render() {
    return html`
      <div class="strip"></div>
      <div class="page">
        <side-bar></side-bar>
        <main>
          <top-bar></top-bar>
          <loan-list></loan-list>
        </main>
        <div class="backdrop"></div>
        <payment-modal></payment-modal>
      </div>
    `;
  }
}
